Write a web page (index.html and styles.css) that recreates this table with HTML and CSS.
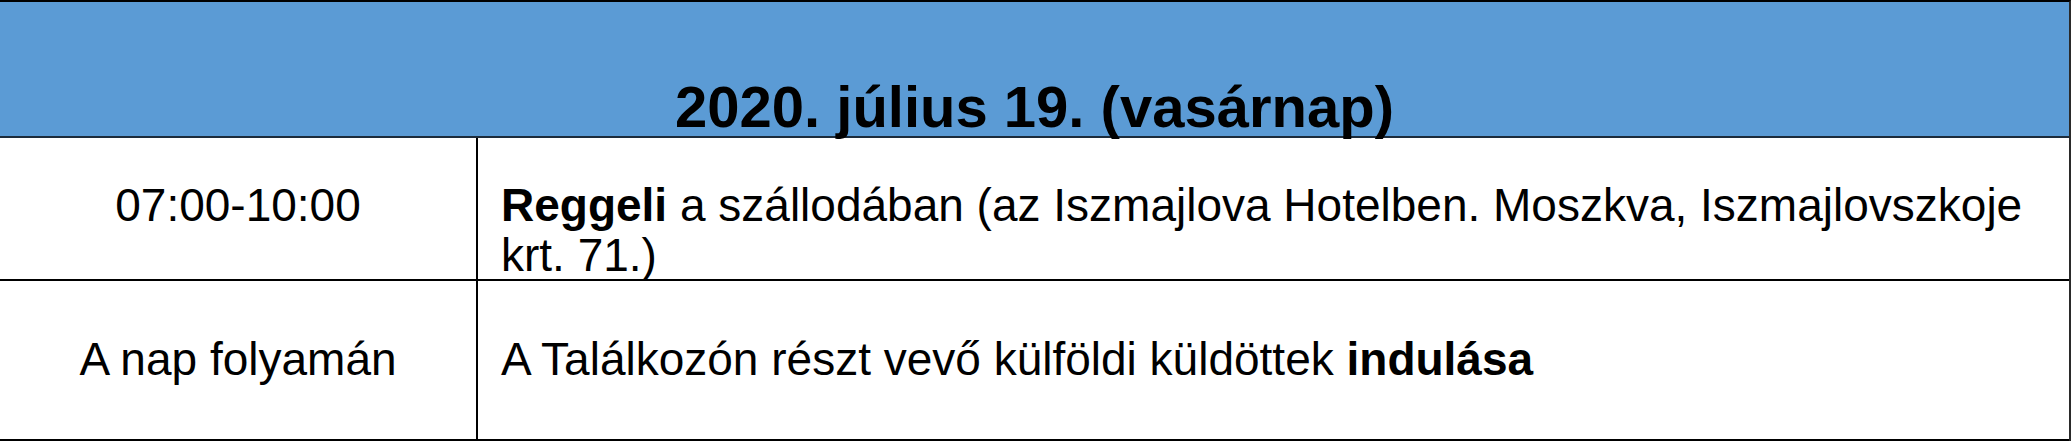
FILE: index.html
```html
<!DOCTYPE html>
<html lang="hu">
<head>
<meta charset="utf-8">
<title>Program</title>
<link rel="stylesheet" href="styles.css">
</head>
<body>
<div class="sheet">
  <div class="day">2020. július 19. (vasárnap)</div>
  <div class="row row-first">
    <div class="time">07:00-10:00</div>
    <div class="desc"><b>Reggeli</b> a szállodában (az Iszmajlova Hotelben. Moszkva, Iszmajlovszkoje krt. 71.)</div>
  </div>
  <div class="row row-second">
    <div class="time">A nap folyamán</div>
    <div class="desc">A Találkozón részt vevő külföldi küldöttek <b>indulása</b></div>
  </div>
</div>
</body>
</html>
```
FILE: styles.css
```css
html, body {
  margin: 0;
  padding: 0;
  background: #ffffff;
}

body {
  font-family: "Liberation Sans", Arial, sans-serif;
  color: #000000;
}

.sheet {
  width: 2071px;
  border-top: 2px solid #000000;
  border-right: 2px solid #2a2a2a;
  box-sizing: border-box;
}

.day {
  box-sizing: border-box;
  height: 136px;
  padding-top: 76px;
  background: #5b9bd5;
  border-bottom: 2px solid #1c2c3c;
  text-align: center;
  font-weight: 700;
  font-size: 58px;
  line-height: 58px;
  white-space: nowrap;
}

.row {
  display: grid;
  grid-template-columns: 478px 1fr;
  border-bottom: 2px solid #000000;
  box-sizing: border-box;
  font-size: 46px;
  line-height: 50px;
}

.row-first {
  height: 143px;
}

.row-second {
  height: 160px;
}

.time {
  border-right: 2px solid #000000;
  text-align: center;
}

.desc {
  padding: 0 23px;
}

.row-first .time,
.row-first .desc {
  padding-top: 42px;
}

.row-second .time,
.row-second .desc {
  padding-top: 53px;
}

b {
  font-weight: 700;
}
```
